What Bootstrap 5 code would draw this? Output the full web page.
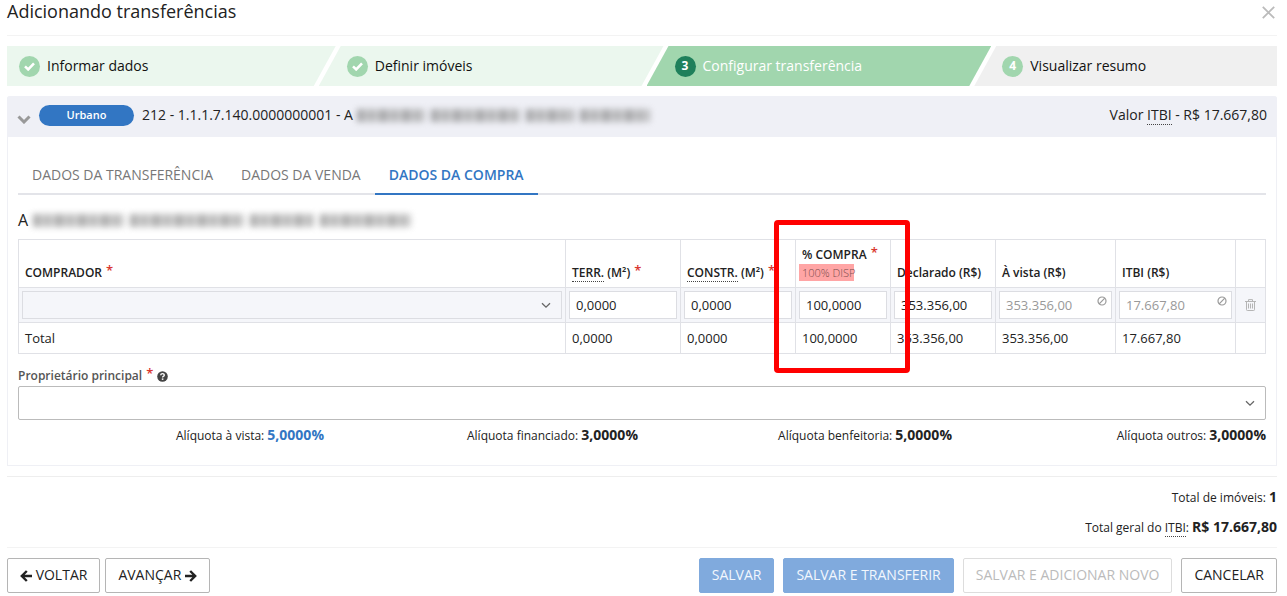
<!DOCTYPE html>
<html lang="pt-BR">
<head>
<meta charset="utf-8">
<meta name="viewport" content="width=device-width, initial-scale=1">
<title>Adicionando transferências</title>
<link href="https://cdn.jsdelivr.net/npm/bootstrap@5.3.0/dist/css/bootstrap.min.css" rel="stylesheet">
<style>
  body { font-family: "Open Sans", sans-serif; font-size: 14px; line-height: 20px; color: #222; background: #fff; }
  .page { padding: 0 10px 3px 7px; }
  .title-bar { height: 36px; padding-bottom: 13px; border-bottom: 1px solid #f3f3f3; }
  .title-bar h1 { font-size: 18px; line-height: 22px; font-weight: 400; }
  .close-x { border: 0; background: none; padding: 2px 2px 0; line-height: 0; }

  .steps { margin: 10px 0; }
  .step { height: 40px; flex: 1 1 70px; min-width: 0; padding-left: 28px; gap: 7px; background: #ebf7ee; color: #111; text-decoration: none;
          clip-path: polygon(22px 0, 100% 0, calc(100% - 22px) 100%, 0 100%); white-space: nowrap; }
  .step + .step { margin-left: -17px; }
  .step:first-child { flex-basis: 54px; padding-left: 12px; clip-path: polygon(0 0, 100% 0, calc(100% - 22px) 100%, 0 100%); }
  .step:last-child { flex-basis: 28px; background: #f0f0f0; clip-path: polygon(22px 0, 100% 0, 100% 100%, 0 100%); }
  .step.current { background: #a1d6ae; color: #fff; }
  .step-dot { width: 21px; height: 21px; flex: none; background: #a1d6ae; color: #fff; font-size: 12px; font-weight: 700; }
  .current .step-dot { background: #1f805b; }

  .panel { border: 1px solid #eff0f5; border-top: 0; border-radius: 3px 3px 0 0; }
  .panel-top { height: 41px; margin: 0 -1px; padding: 0 10px 3px; background: #eff0f6; border-radius: 3px 3px 0 0; }
  .kind { width: 95px; height: 21px; line-height: 20px; font-size: 11px; font-weight: 600; background: #3276c3; color: #fff; text-align: center; }
  .panel-inner { padding: 20px 10px 19px; }
  abbr[title] { text-decoration: none; border-bottom: 1px dotted #444; cursor: help; }

  .hidden-name { display: inline-flex; align-items: center; gap: 6px; filter: blur(3px); opacity: .6; }
  .hidden-name i { height: 13px; background: repeating-linear-gradient(90deg, #777 0 7px, #b5b5b5 7px 11px, #888 11px 16px, #aaa 16px 23px); }

  .tabs { border-bottom: 2px solid #e3e4e9; }
  .tabs .nav-link { padding: 8px 14px 8px; margin-bottom: -2px; border-bottom: 2px solid transparent; color: #777; }
  .tabs .nav-link.active { color: #3276c3; font-weight: 600; border-color: #3276c3; }
  .owner { font-size: 16px; line-height: 24px; margin: 13px 0 7px; gap: 5px; }

  .grid { width: 100%; table-layout: fixed; border-collapse: collapse; font-size: 13px; line-height: 18px; }
  .grid th, .grid td { border: 1px solid #e0e1e6; padding: 0 6px; }
  .grid thead th { height: 48px; vertical-align: bottom; padding-bottom: 5px; font-size: 12px; font-weight: 600; white-space: nowrap; }
  .grid .entry td { height: 35px; padding: 0 3px; background: #f5f6fa; }
  .grid .sum td { height: 31px; }
  .grid input, .grid select { display: block; width: 100%; height: 28px; padding: 0 6px; border: 1px solid #dcdde2; border-radius: 0; background-color: #fff; color: #222; font-size: 13px; }
  .grid input:disabled { color: #999; }
  .grid select { background-color: #f5f6fa; }
  select.pick { appearance: none; background-repeat: no-repeat; background-position: right 9px center; background-size: 12px 12px;
    background-image: url("data:image/svg+xml,%3Csvg xmlns='http://www.w3.org/2000/svg' viewBox='0 0 12 12'%3E%3Cpath d='M2 4.2l4 4 4-4' fill='none' stroke='%23666' stroke-width='1.3'/%3E%3C/svg%3E"); }
  .req { color: #d9362f; font-size: 13px; font-weight: 600; line-height: 1; vertical-align: 2px; margin-left: 1px; }
  .avail { width: 55px; height: 17px; line-height: 17px; margin: 0 0 1px -3px; padding-left: 3px; background: #ffa5a5; color: #7a4c4c; font-size: 11px; font-weight: 300; }
  .ban { position: absolute; top: 5px; right: 5px; }
  .spot { position: absolute; z-index: 2; top: -20px; left: -22px; width: 136px; height: 153px; border: 5px solid #f00; border-radius: 4px; pointer-events: none; }
  .trash { border: 0; padding: 0; background: none; display: block; margin: auto; line-height: 0; }

  .main-label { margin-top: 12px; font-size: 12px; font-weight: 600; color: #555; }
  .main-owner { display: block; width: 100%; height: 34px; border: 1px solid #bbb; border-radius: 2px; background-color: #fff; }
  .rates { margin-top: 5px; font-size: 12px; }
  .rates > div { flex: 1 1 0; text-align: right; }
  .rates > div:first-child { flex: 0 0 306px; }
  .rates .cash { color: #3276c3; }
  .rates strong, .totals strong { font-size: 14px; }
  .totals { margin-top: 10px; padding: 10px 0 9px; gap: 9px; font-size: 12px; border-top: 1px solid #eee; border-bottom: 1px solid #f3f3f3; }

  .actions { padding-top: 10px; gap: 5px; }
  .saves { gap: 9px; }
  .act { height: 35px; padding: 0 12px 2px; font-size: 14px; line-height: 20px; border: 1px solid #b5b5b5; border-radius: 2px; color: #222; background: #fff; white-space: nowrap; }
  .act:disabled { opacity: 1; color: #bbb; border-color: #ddd; background: #fff; }
  .act.main:disabled { background: #80aadd; border-color: #80aadd; color: #f2f7fd; }
</style>
</head>
<body>
<div class="page">
  <header class="title-bar d-flex justify-content-between align-items-center">
    <h1 class="m-0">Adicionando transferências</h1>
    <button class="close-x" type="button" aria-label="Fechar"><svg width="13" height="13" viewBox="0 0 13 13"><path d="M.8.8l11.4 11.4M12.2.8L.8 12.2" stroke="#bbb" stroke-width="1.8"/></svg></button>
  </header>

  <nav class="steps d-flex" aria-label="Etapas">
    <a href="#" class="step d-flex align-items-center"><span class="step-dot rounded-circle d-flex align-items-center justify-content-center"><svg width="11" height="9" viewBox="0 0 11 9"><path d="M1 4.4l3.2 3L10 1.4" fill="none" stroke="#fff" stroke-width="2.6"/></svg></span>Informar dados</a>
    <a href="#" class="step d-flex align-items-center"><span class="step-dot rounded-circle d-flex align-items-center justify-content-center"><svg width="11" height="9" viewBox="0 0 11 9"><path d="M1 4.4l3.2 3L10 1.4" fill="none" stroke="#fff" stroke-width="2.6"/></svg></span>Definir imóveis</a>
    <a href="#" class="step current d-flex align-items-center" aria-current="step"><span class="step-dot rounded-circle d-flex align-items-center justify-content-center">3</span>Configurar transferência</a>
    <a href="#" class="step d-flex align-items-center"><span class="step-dot rounded-circle d-flex align-items-center justify-content-center">4</span>Visualizar resumo</a>
  </nav>

  <section class="panel">
    <div class="panel-top d-flex align-items-center">
      <svg class="mt-2" width="14" height="9" viewBox="0 0 14 9"><path d="M1.5 1.5L7 7l5.500-5.500" fill="none" stroke="#999" stroke-width="3"/></svg>
      <span class="kind rounded-pill mx-2">Urbano</span>
      <span>212 - 1.1.1.7.140.0000000001 - A</span>
      <span class="hidden-name ms-1" aria-hidden="true"><i style="width:68px"></i><i style="width:89px"></i><i style="width:48px"></i><i style="width:70px"></i></span>
      <span class="ms-auto">Valor <abbr title="Imposto sobre Transmissão de Bens Imóveis">ITBI</abbr> - R$ 17.667,80</span>
    </div>

    <div class="panel-inner">
      <ul class="nav tabs">
        <li class="nav-item"><a class="nav-link" href="#">DADOS DA TRANSFERÊNCIA</a></li>
        <li class="nav-item"><a class="nav-link" href="#">DADOS DA VENDA</a></li>
        <li class="nav-item"><a class="nav-link active" href="#" aria-current="page">DADOS DA COMPRA</a></li>
      </ul>

      <h2 class="owner d-flex align-items-center">A <span class="hidden-name" aria-hidden="true"><i style="width:91px"></i><i style="width:114px"></i><i style="width:64px"></i><i style="width:91px"></i></span></h2>

      <table class="grid">
        <colgroup><col><col style="width:115px"><col style="width:115px"><col style="width:95px"><col style="width:105px"><col style="width:120px"><col style="width:120px"><col style="width:30px"></colgroup>
        <thead>
          <tr>
            <th scope="col">COMPRADOR <span class="req">*</span></th>
            <th scope="col"><abbr title="Terreno">TERR.</abbr> (M²) <span class="req">*</span></th>
            <th scope="col"><abbr title="Construção">CONSTR.</abbr> (M²) <span class="req">*</span></th>
            <th scope="col" class="position-relative">% COMPRA <span class="req">*</span><div class="avail">100% DISP</div><span class="spot"></span></th>
            <th scope="col">Declarado (R$)</th>
            <th scope="col">À vista (R$)</th>
            <th scope="col">ITBI (R$)</th>
            <th></th>
          </tr>
        </thead>
        <tbody>
          <tr class="entry">
            <td><select class="pick" aria-label="Comprador"><option></option></select></td>
            <td><input type="text" value="0,0000" aria-label="Terreno (m²)"></td>
            <td><input type="text" value="0,0000" aria-label="Construção (m²)"></td>
            <td><input type="text" value="100,0000" aria-label="% Compra"></td>
            <td><input type="text" value="353.356,00" aria-label="Declarado (R$)"></td>
            <td><div class="position-relative"><input type="text" value="353.356,00" aria-label="À vista (R$)" disabled><svg class="ban" width="10" height="10" viewBox="0 0 10 10"><circle cx="5" cy="5" r="4" fill="none" stroke="#999" stroke-width="1.200"/><path d="M2.200 7.800l5.600-5.600" stroke="#999" stroke-width="1.200"/></svg></div></td>
            <td><div class="position-relative"><input type="text" value="17.667,80" aria-label="ITBI (R$)" disabled><svg class="ban" width="10" height="10" viewBox="0 0 10 10"><circle cx="5" cy="5" r="4" fill="none" stroke="#999" stroke-width="1.200"/><path d="M2.200 7.800l5.600-5.600" stroke="#999" stroke-width="1.200"/></svg></div></td>
            <td><button class="trash" type="button" aria-label="Remover"><svg width="11" height="12" viewBox="0 0 11 12" fill="none" stroke="#b5b5b5"><path d="M0 2.500h11M3.500 2.300V.6h4v1.700M1.500 2.500v8.200q0 .8.8.8h6.400q.8 0 .8-.8V2.500M3.500 4.500v5M5.500 4.500v5M7.500 4.500v5"/></svg></button></td>
          </tr>
          <tr class="sum">
            <td>Total</td><td>0,0000</td><td>0,0000</td><td>100,0000</td><td>353.356,00</td><td>353.356,00</td><td>17.667,80</td><td></td>
          </tr>
        </tbody>
      </table>

      <div class="main-label d-flex align-items-center">
        <label for="mainOwner">Proprietário principal <span class="req">*</span></label>
        <svg class="ms-1" width="11" height="11" viewBox="0 0 11 11"><circle cx="5.500" cy="5.500" r="5.300" fill="#444"/><path d="M3.700 4.200Q3.800 2.600 5.500 2.600T7.300 4.100Q7.300 5 6.300 5.400 5.600 5.700 5.600 6.500" fill="none" stroke="#fff" stroke-width="1.400"/><path d="M4.800 7.400h1.600v1.500H4.800z" fill="#fff"/></svg>
      </div>
      <select id="mainOwner" class="pick main-owner"><option></option></select>

      <div class="rates d-flex">
        <div>Alíquota à vista: <strong class="cash">5,0000%</strong></div>
        <div>Alíquota financiado: <strong>3,0000%</strong></div>
        <div>Alíquota benfeitoria: <strong>5,0000%</strong></div>
        <div>Alíquota outros: <strong>3,0000%</strong></div>
      </div>
    </div>
  </section>

  <div class="totals d-flex flex-column align-items-end">
    <div>Total de imóveis: <strong>1</strong></div>
    <div>Total geral do <abbr title="Imposto sobre Transmissão de Bens Imóveis">ITBI</abbr>: <strong>R$ 17.667,80</strong></div>
  </div>

  <footer class="actions d-flex">
    <button class="act" type="button"><svg width="12" height="12" viewBox="0 0 12 12"><path d="M6.800 1L1.800 6l5 5M2 6h10" fill="none" stroke="#222" stroke-width="2.400"/></svg> VOLTAR</button>
    <button class="act" type="button">AVANÇAR <svg width="12" height="12" viewBox="0 0 12 12"><path d="M5.200 1l5 5-5 5M10 6H0" fill="none" stroke="#222" stroke-width="2.400"/></svg></button>
    <div class="saves d-flex ms-auto">
      <button class="act main" type="button" disabled>SALVAR</button>
      <button class="act main" type="button" disabled>SALVAR E TRANSFERIR</button>
      <button class="act" type="button" disabled>SALVAR E ADICIONAR NOVO</button>
      <button class="act" type="button">CANCELAR</button>
    </div>
  </footer>
</div>
<script src="https://cdn.jsdelivr.net/npm/bootstrap@5.3.0/dist/js/bootstrap.bundle.min.js"></script>
</body>
</html>
